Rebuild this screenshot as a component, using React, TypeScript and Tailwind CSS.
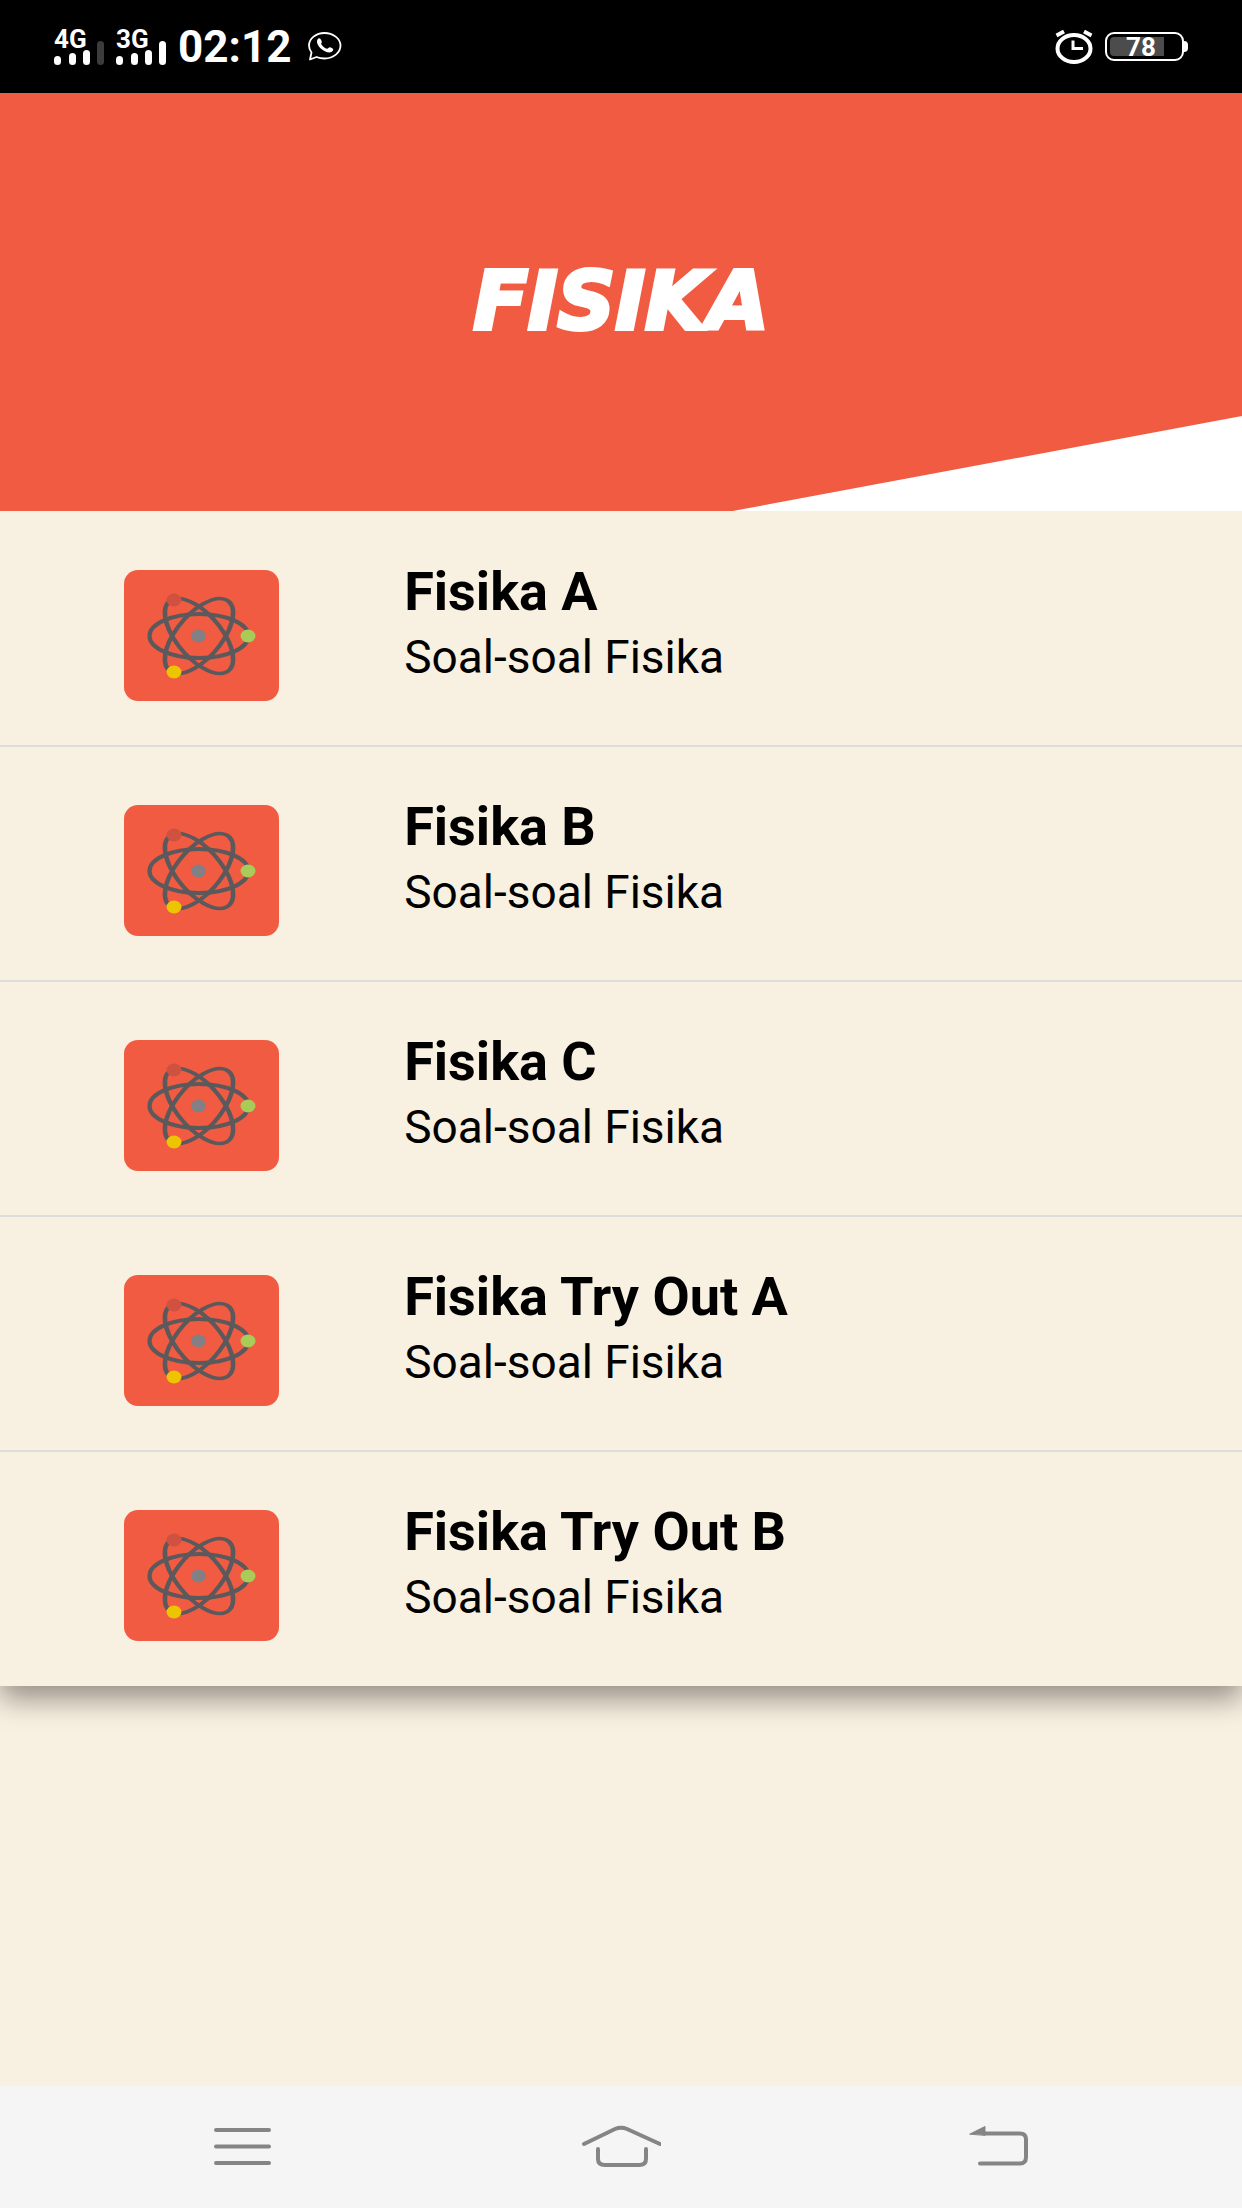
const packets = [
  { title: 'Fisika A', description: 'Soal-soal Fisika' },
  { title: 'Fisika B', description: 'Soal-soal Fisika' },
  { title: 'Fisika C', description: 'Soal-soal Fisika' },
  { title: 'Fisika Try Out A', description: 'Soal-soal Fisika' },
  { title: 'Fisika Try Out B', description: 'Soal-soal Fisika' },
];

function Signal({ label, weak }: { label: string; weak?: boolean }) {
  return (
    <div className="flex h-9 w-[50px] items-end justify-between">
      <div className="flex w-9 flex-col">
        <span className="text-[26px] leading-5 font-bold">{label}</span>
        <div className="flex h-4 items-end justify-between">
          <span className="h-[9px] w-[7px] rounded-sm bg-white" />
          <span className="h-3 w-[7px] rounded-sm bg-white" />
          <span className="h-[15px] w-[7px] rounded-sm bg-white" />
        </div>
      </div>
      <span className={`h-6 w-[7px] rounded-sm ${weak ? 'bg-[#3c3c3c]' : 'bg-white'}`} />
    </div>
  );
}

function StatusBar() {
  return (
    <div className="flex h-[93px] items-center justify-between bg-black px-[54px] text-white">
      <div className="flex items-center">
        <div className="flex gap-3">
          <Signal label="4G" weak />
          <Signal label="3G" />
        </div>
        <time className="ml-3 text-[44px] leading-none font-bold">02:12</time>
        <svg className="ml-4 h-8 w-9" viewBox="0 0 36 32" fill="none">
          <path
            d="M4.5 21.5C2.5 18.8 2 16.5 2 14.5 2 7.5 9 2 17.5 2S33.5 7.5 33.5 14.5 26.5 27.5 17.5 27.5C14.5 27.5 12 27 9.5 26L3 28.5Z"
            stroke="currentColor"
            strokeWidth="1.8"
            strokeLinejoin="round"
          />
          <path
            d="M10.5 8.5C12 6.5 13.5 7.3 14.5 9.8 15.5 12.2 13.5 12.3 14.5 13.6 16 15.8 17.8 17.3 20 17.8 21.2 18 21.8 15.7 23.2 16.3 25.8 17.5 26.8 18 26 19.5 24.5 22 20.5 22 16.5 19.5 11.5 16.5 8.8 11.5 10.5 8.5Z"
            fill="currentColor"
          />
        </svg>
      </div>

      <div className="flex items-center gap-3">
        <svg className="h-[34px] w-[38px]" viewBox="0 0 38 34" fill="none" stroke="currentColor">
          <ellipse cx="19" cy="18.5" rx="16.5" ry="13.5" strokeWidth="4" />
          <path d="M18 10.5V18.5H28" strokeWidth="3" />
          <path d="M1.5 5.5 9 1.5M29 1.5 36.5 5.5" strokeWidth="4" />
        </svg>
        <div className="flex items-center">
          <div className="flex h-[29px] w-[79px] rounded-[9px] border-2 border-white p-[3px]">
            <div className="flex w-[78%] items-center justify-end rounded-l-sm bg-[#4c4c4c] pr-2 text-[26px] leading-none font-bold">
              78
            </div>
          </div>
          <span className="h-[11px] w-1 rounded-r-sm bg-white" />
        </div>
      </div>
    </div>
  );
}

function AtomIcon() {
  return (
    <svg
      className="h-[131px] w-[155px] shrink-0 rounded-[14px] bg-[#f15b42]"
      viewBox="0 0 155 131"
      fill="none"
    >
      <g stroke="#5b595c" strokeWidth="3.8">
        <ellipse rx="45" ry="20" transform="translate(75 66) scale(1.1 1.1)" />
        <ellipse rx="45" ry="20" transform="translate(75 66) scale(1.2 .93) rotate(60)" />
        <ellipse rx="45" ry="20" transform="translate(75 66) scale(1.2 .93) rotate(-60)" />
      </g>
      <ellipse cx="74.5" cy="66" rx="7.5" ry="6.5" fill="#828084" />
      <ellipse cx="50" cy="30" rx="7.5" ry="6.5" fill="#cf5240" />
      <ellipse cx="124" cy="66" rx="7.5" ry="6.5" fill="#a9cb57" />
      <ellipse cx="50" cy="102" rx="7.5" ry="6.5" fill="#ecc500" />
    </svg>
  );
}

function NavigationBar() {
  return (
    <nav className="flex h-[122px] items-center justify-between bg-[#f5f5f5] px-[202px] text-[#858585]">
      <button type="button" aria-label="Menu">
        <svg className="h-[46px] w-20" viewBox="0 0 80 46" fill="none" stroke="currentColor" strokeWidth="4" strokeLinecap="round">
          <path d="M14 6H67M14 22.5H67M14 39H67" />
        </svg>
      </button>
      <button type="button" aria-label="Home">
        <svg className="h-[46px] w-20" viewBox="0 0 80 46" fill="none" stroke="currentColor" strokeWidth="4" strokeLinecap="round">
          <path d="M3 20 34 5Q40 2.500 46 5L79 20" />
          <path d="M17 25V35Q17 41 24 41H58Q65 41 65 35V25" />
        </svg>
      </button>
      <button type="button" aria-label="Back">
        <svg className="h-[46px] w-20" viewBox="0 0 80 46" fill="none" stroke="currentColor" strokeWidth="4" strokeLinecap="round">
          <path d="M24 9.500H60Q66 9.500 66 15.500V33Q66 39.500 60 39.500H20" />
          <path d="M10 10 25 2.500V11Z" fill="currentColor" strokeWidth="1" />
        </svg>
      </button>
    </nav>
  );
}

export default function App() {
  return (
    <div className="flex min-h-screen flex-col bg-[#f8f0e0] font-['Roboto',sans-serif] text-black">
      <StatusBar />
      <header className="relative flex h-[418px] items-center justify-center bg-[#f15b42]">
        <h1 className="font-['DejaVu_Sans',sans-serif] text-[80px] leading-none font-bold text-white italic [-webkit-text-stroke:4px_white]">
          FISIKA
        </h1>
        <div className="absolute right-0 bottom-0 h-[95px] w-[41%] bg-white [clip-path:polygon(100%_0,100%_100%,0_100%)]" />
      </header>

      <main className="flex-1">
        <ul className="divide-y-2 divide-[#dcdcdc] pt-px shadow-[0_12px_28px_rgba(0,0,0,0.42)]">
          {packets.map((packet) => (
            <li key={packet.title} className="h-[235px] last:h-[234px]">
              <a href="#" className="flex h-full items-start pt-[58px] pl-[10%]">
                <AtomIcon />
                <div className="ml-[125px]">
                  <h2 className="text-[54px] leading-[44px] font-bold">{packet.title}</h2>
                  <p className="mt-5 text-[46px] leading-[46px]">{packet.description}</p>
                </div>
              </a>
            </li>
          ))}
        </ul>
      </main>

      <NavigationBar />
    </div>
  );
}
